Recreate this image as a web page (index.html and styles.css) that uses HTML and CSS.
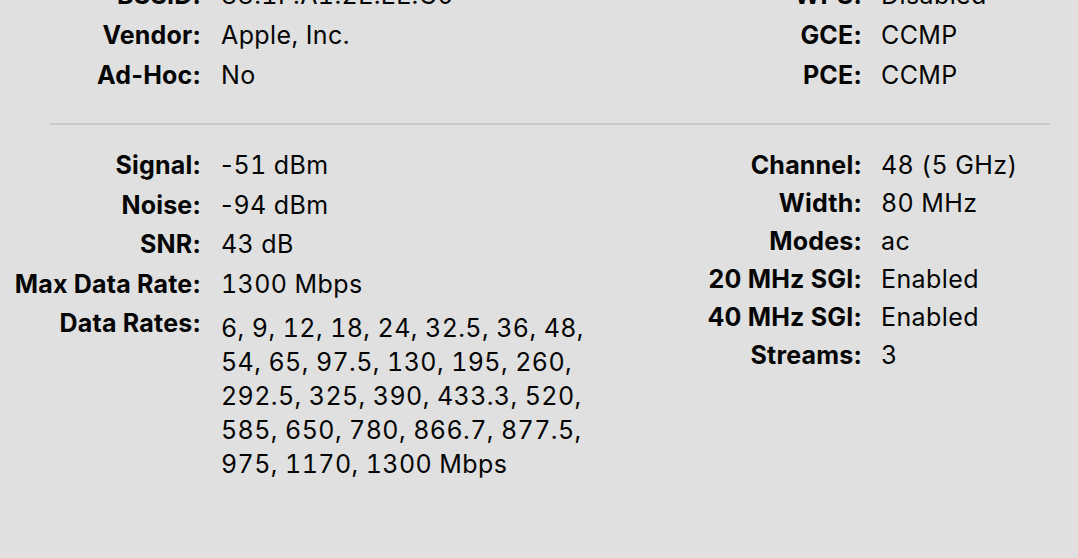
FILE: index.html
```html
<!DOCTYPE html>
<html lang="en">
<head>
<meta charset="utf-8">
<title>Wi-Fi Info</title>
<link rel="stylesheet" href="styles.css">
</head>
<body>
<div class="panel">
  <section class="section section-top">
    <dl class="grid grid-left">
      <dt>BSSID:</dt><dd>88:1F:A1:2E:EE:C0</dd>
      <dt>Vendor:</dt><dd>Apple, Inc.</dd>
      <dt>Ad-Hoc:</dt><dd>No</dd>
    </dl>
    <dl class="grid grid-right">
      <dt>WPS:</dt><dd>Disabled</dd>
      <dt>GCE:</dt><dd>CCMP</dd>
      <dt>PCE:</dt><dd>CCMP</dd>
    </dl>
  </section>
  <hr class="divider">
  <section class="section section-bottom">
    <dl class="grid grid-left rows-loose">
      <dt>Signal:</dt><dd><span class="sign">-</span>51 dBm</dd>
      <dt>Noise:</dt><dd><span class="sign">-</span>94 dBm</dd>
      <dt>SNR:</dt><dd>43 dB</dd>
      <dt>Max Data Rate:</dt><dd>1300 Mbps</dd>
      <dt>Data Rates:</dt>
      <dd class="multi">
        <span>6, 9, 12, 18, 24, 32.5, 36, 48,</span>
        <span>54, 65, 97.5, 130, 195, 260,</span>
        <span>292.5, 325, 390, 433.3, 520,</span>
        <span>585, 650, 780, 866.7, 877.5,</span>
        <span>975, 1170, 1300 Mbps</span>
      </dd>
    </dl>
    <dl class="grid grid-right rows-tight">
      <dt>Channel:</dt><dd>48 (5 GHz)</dd>
      <dt>Width:</dt><dd>80 MHz</dd>
      <dt>Modes:</dt><dd>ac</dd>
      <dt>20 MHz SGI:</dt><dd>Enabled</dd>
      <dt>40 MHz SGI:</dt><dd>Enabled</dd>
      <dt>Streams:</dt><dd>3</dd>
    </dl>
  </section>
</div>
</body>
</html>
```
FILE: styles.css
```css
html, body {
  margin: 0;
  padding: 0;
  height: 100%;
  overflow: hidden;
}
body {
  background: #dfe0df;
  font-family: Inter, "Liberation Sans", sans-serif;
  font-size: 25px;
  color: #050505;
}
.panel {
  display: flex;
  flex-direction: column;
  margin-top: -25px;
}
.section {
  display: grid;
  grid-template-columns: 660px 1fr;
}
.grid {
  display: grid;
  margin: 0;
  align-content: start;
}
.grid-left {
  grid-template-columns: 201px 1fr;
  column-gap: 20px;
}
.grid-right {
  grid-template-columns: 202px 1fr;
  column-gap: 19px;
}
.grid dt {
  font-weight: 700;
  text-align: right;
  white-space: nowrap;
  letter-spacing: 0.2px;
}
.grid dd {
  margin: 0;
  white-space: nowrap;
  letter-spacing: 0.4px;
  font-variant-numeric: tabular-nums;
}
.sign {
  font-variant-numeric: normal;
  letter-spacing: 1px;
}
.section-top .grid {
  line-height: 40px;
}
.rows-loose {
  line-height: 39.5px;
}
.rows-tight {
  line-height: 38px;
}
.divider {
  border: 0;
  height: 2px;
  background: #c8c9c8;
  margin: 28px 28px 21px 50px;
}
.multi {
  display: flex;
  flex-direction: column;
  line-height: 34px;
  padding-top: 7px;
}
```
